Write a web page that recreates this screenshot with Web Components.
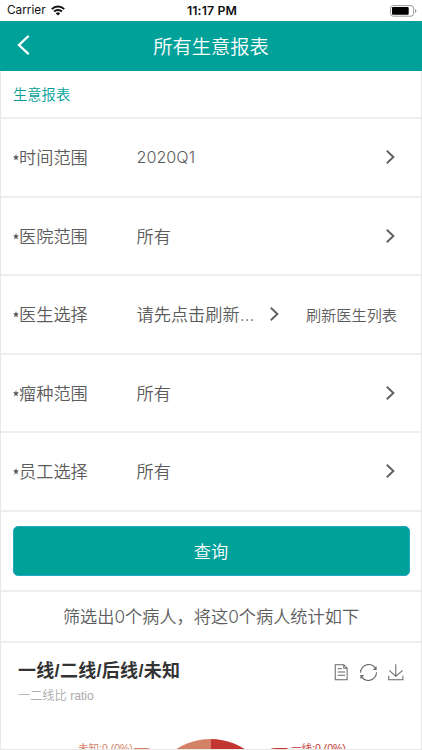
<!DOCTYPE html>
<html lang="zh-CN">
<head>
<meta charset="utf-8">
<title>所有生意报表</title>
<style>
html,body{margin:0;height:100%;overflow:hidden;background:#fff}
body{font-family:Inter,"Noto Sans CJK SC",sans-serif;color:#5c5c5c}
</style>
</head>
<body>
<report-app></report-app>
<script>
const define = (name, html) => customElements.define(name, class extends HTMLElement {
  constructor() {
    super();
    this.attachShadow({mode: 'open'}).innerHTML = html;
  }
});

define('status-bar', `
<style>
:host{display:grid;grid-template-columns:1fr auto 1fr;align-items:center;height:21px;padding:0 5px 0 7px;color:#111;background:#fff;font:12px/21px Inter,sans-serif}
.l{display:flex;align-items:center;gap:5px}
b{font-weight:600;font-size:12.3px;letter-spacing:.15px}
.l span{font-size:11.8px}
.bat{justify-self:end;display:block}
</style>
<div class="l"><span>Carrier</span>
<svg width="14" height="11" viewBox="0 0 14 11" fill="none" stroke="#111" stroke-width="2"><path d="M.8 4.1a8.8 8.8 0 0 1 12.4 0M3.1 6.5a5.5 5.5 0 0 1 7.8 0"/><path d="M7 10.6 4.8 8.4a3.1 3.1 0 0 1 4.4 0z" fill="#111" stroke="none"/></svg></div>
<b>11:17 PM</b>
<svg class="bat" width="27" height="12" viewBox="0 0 27 12"><rect x=".6" y=".6" width="23" height="10.6" rx="2.6" fill="none" stroke="#999"/><rect x="2" y="2" width="16.7" height="7.8" rx="1" fill="#000"/><path d="M25 4v4q1.4-.5 1.4-2T25 4" fill="#999"/></svg>`);

define('nav-bar', `
<style>
:host{display:grid;grid-template-columns:60px 1fr 60px;align-items:center;height:50px;background:#00a199;color:#fff}
svg{margin:-2px 0 0 17px;display:block}
div{text-align:center;font-size:19.3px;line-height:48px;height:50px;padding-top:2px;box-sizing:border-box;font-weight:350}
</style>
<svg width="13" height="20" viewBox="0 0 13 20" fill="none" stroke="#fff" stroke-width="2.4" stroke-linecap="round"><path d="M11 1.5 2 10l9 8.5"/></svg>
<div><slot></slot></div>`);

define('chevron-icon', `
<style>:host{display:block;width:9px;height:14px}svg{display:block}</style>
<svg width="9" height="14" viewBox="0 0 9 14" fill="none" stroke="#606060" stroke-width="1.9"><path d="M.8.8 7.4 7 .8 13.2"/></svg>`);

define('form-row', `
<style>
:host{display:flex;align-items:center;box-sizing:border-box;height:78.5px;border-bottom:2px solid #eee;padding:0 26px 0 12px;font-size:17.2px;font-weight:350}
.label{display:flex;align-items:center;width:123.5px}
.label,.value{padding-bottom:1px}
.label svg{margin:2px 0 0 0}
.value{flex:1;white-space:nowrap}
</style>
<div class="label"><svg width="6" height="7" viewBox="0 0 6 7" fill="#555"><path d="M3 0l.7 2.3L6 2.4 4.2 4l.8 2.600L3 5.100 1 6.600 1.800 4 0 2.400l2.300-.1z"/></svg><slot name="label"></slot></div>
<div class="value"><slot></slot></div>
<slot name="end"><chevron-icon></chevron-icon></slot>`);

define('query-button', `
<style>
:host{display:block;padding:14px 11.500px 14.200px;border-bottom:2px solid #eee}
button{display:block;width:100%;height:50.300px;box-sizing:border-box;border:1px solid #22a7c8;border-radius:5px;background:#00a199;color:#fff;padding:0;font:350 17.2px "Noto Sans CJK SC",sans-serif}
</style>
<button><slot></slot></button>`);

define('chart-card', `
<style>
:host{display:block;flex:1;position:relative;min-height:0;overflow:hidden}
header{display:flex;justify-content:space-between;padding:14px 17px 0 17px}
h2{margin:0;font:700 18px/28px "Liberation Sans","Noto Sans CJK SC",sans-serif;letter-spacing:.3px;color:#333;white-space:nowrap}
p{margin:0;font:350 12.200px/22px "Liberation Sans","Noto Sans CJK SC",sans-serif;color:#aaa}
.tools{display:flex;gap:11px;padding-top:7px}
.tools svg{display:block;fill:none;stroke:#666}
.plot{position:absolute;left:0;top:92px;width:420px;height:18px;overflow:hidden}
text{font:10.500px "Liberation Sans","Noto Sans CJK SC",sans-serif}
</style>
<header>
<div><h2>一线/二线/后线/未知</h2><p>一二线比 ratio</p></div>
<div class="tools">
<svg width="16" height="17" viewBox="0 0 60 62" stroke-width="3.800"><path d="M17.500 17.300H33M45.400 29.500h-28M8.500 2v56H53V14.800L40.400 2H8.500zM40.400 2.200v12.700H53M45.400 41.700h-28"/></svg>
<svg width="17" height="17" viewBox="0 0 60 60" stroke-width="3.800"><path d="M47 18.900h9.800V8.700M56.300 20.100C52.100 9 40.500.6 26.800 2.100 12.600 3.700 1.600 16.200 2.100 30.600M13 41.100H3.100v10.200M3.700 39.900c4.200 11.100 15.800 19.500 29.500 18 14.200-1.600 25.200-14.100 24.700-28.500"/></svg>
<svg width="16" height="17" viewBox="0 0 60 62" stroke-width="3.800"><path d="M4.700 22.900 29.300 45.500 54.700 23.400M2.600 43.600V58h53.200V43.600M29.200 45.100V0"/></svg>
</div>
</header>
<svg class="plot" viewBox="0 0 420 18">
<path d="M209.500 67V4a63 63 0 0 0-63 63z" fill="#d48265"/><path d="M209.500 67V4a63 63 0 0 1 63 63z" fill="#c23531"/>
<text x="77" y="16.500" fill="#d48265">未知:0 (0%)</text><path d="M133 13.500h13q3 0 5 2" stroke="#d48265" fill="none"/>
<text x="290" y="16.500" fill="#c23531">一线:0 (0%)</text><path d="M286.500 13.500h-13q-3 0-5 2" stroke="#c23531" fill="none"/>
</svg>`);

define('report-app', `
<style>
:host{display:flex;flex-direction:column;height:750px;width:422px}
main{flex:1;min-height:0;display:flex;flex-direction:column;border:1px solid #e8e8e8;border-top:0;box-sizing:border-box}
main>*{flex-shrink:0}
main>chart-card{flex:1 1 0}
.sec{height:46px;line-height:47px;padding-left:12px;border-bottom:2px solid #eee;color:#009e96;font-size:14.300px;font-weight:350;box-sizing:content-box}
.sum{height:48.700px;line-height:49px;border-bottom:2px solid #eee;text-align:center;font-size:17.200px;font-weight:350}
.num{font-size:16.2px;font-weight:300}
.doctor{display:flex;align-items:center;gap:27px;font-size:15.200px;margin-right:-2px}
.doctor span{padding-bottom:1px}
</style>
<status-bar></status-bar>
<nav-bar>所有生意报表</nav-bar>
<main>
<div class="sec">生意报表</div>
<form-row><span slot="label">时间范围</span><span class="num">2020Q1</span></form-row>
<form-row><span slot="label">医院范围</span>所有</form-row>
<form-row><span slot="label">医生选择</span>请先点击刷新…<div class="doctor" slot="end"><chevron-icon></chevron-icon><span>刷新医生列表</span></div></form-row>
<form-row><span slot="label">瘤种范围</span>所有</form-row>
<form-row><span slot="label">员工选择</span>所有</form-row>
<query-button>查询</query-button>
<div class="sum">筛选出0个病人，将这0个病人统计如下</div>
<chart-card></chart-card>
</main>`);
</script>
</body>
</html>
